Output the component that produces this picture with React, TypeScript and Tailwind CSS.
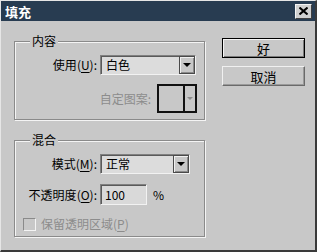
import React from 'react';

const FONT = { fontFamily: '"Noto Sans CJK SC", "Noto Sans", sans-serif' };

function Arrow({ color = '#000', small = false }: { color?: string; small?: boolean }) {
  const w = small ? 6 : 8;
  return (
    <svg width={w} height={small ? 3 : 4} viewBox={`0 0 ${w} ${small ? 3 : 4}`}>
      <polygon points={small ? '0,0 6,0 3,3' : '0,0 8,0 4,4'} fill={color} />
    </svg>
  );
}

function Combo({ value, width }: { value: string; width: string }) {
  return (
    <div
      className={`${width} h-[20px] flex items-stretch bg-[#dcdcdc] border border-[#808080] border-r-[#f2f2f2] border-b-[#f2f2f2] shadow-[inset_1px_1px_0_#5a5a5a]`}
    >
      <span className="flex-1 pl-[5px] text-[12px] leading-[18px] text-black">{value}</span>
      <span className="w-[16px] flex items-center justify-center bg-[#c8c8c8] border border-[#4a4a4a] shadow-[inset_1px_1px_0_#f0f0f0,inset_-1px_-1px_0_#8a8a8a]">
        <Arrow />
      </span>
    </div>
  );
}

function Label({ text, hot, rest = '):' }: { text: string; hot: string; rest?: string }) {
  return (
    <span className="text-[12px] leading-[20px] text-black whitespace-nowrap">
      {text}(<span className="underline underline-offset-2">{hot}</span>{rest}
    </span>
  );
}

function Group({ title, children }: { title: string; children: React.ReactNode }) {
  return (
    <div className="relative w-[191px] border border-[#8a8a8a] shadow-[inset_1px_1px_0_#f4f4f4,1px_1px_0_#f4f4f4]">
      <span className="absolute -top-[9px] left-[15px] px-[2px] bg-[#c8c8c8] text-[12px] leading-[16px] text-black">
        {title}
      </span>
      {children}
    </div>
  );
}

function Button({ text, primary = false }: { text: string; primary?: boolean }) {
  return (
    <button
      type="button"
      className={`w-[83px] h-[20px] flex items-center justify-center bg-[#c8c8c8] text-[13px] leading-none text-black ${
        primary
          ? 'border border-black shadow-[inset_1px_1px_0_#f4f4f4,inset_-1px_-1px_0_#7a7a7a]'
          : 'border border-[#f0f0f0] border-r-[#6a6a6a] border-b-[#6a6a6a] shadow-[inset_-1px_-1px_0_#9a9a9a]'
      }`}
    >
      {text}
    </button>
  );
}

export default function App() {
  return (
    <div
      className="w-[317px] h-[252px] flex flex-col bg-[#c8c8c8] border-t border-l border-[#e6e6e6] border-r-[#3a3a3a] border-b-[#3a3a3a] border-r-2 border-b-2"
      style={FONT}
    >
      <div className="h-[20px] mr-[0px] flex items-center justify-between bg-[#283c51] pl-[4px] pr-[3px]">
        <span className="text-[13px] font-bold text-white leading-none">填充</span>
        <span className="w-[17px] h-[15px] flex items-center justify-center bg-[#d0d0d0] border border-[#f4f4f4] border-r-[#404040] border-b-[#404040]">
          <svg width="9" height="8" viewBox="0 0 9 8">
            <path d="M0.5 0.5 L8.5 7.5 M8.5 0.5 L0.5 7.5" stroke="#000" strokeWidth="2" />
          </svg>
        </span>
      </div>

      <div className="flex">
        <div className="flex flex-col pl-[13px] pt-[20px] gap-[20px]">
          <Group title="内容">
            <div className="pt-[13px] pb-[6px] flex flex-col gap-[9px]">
              <div className="flex items-center gap-[3px]">
                <span className="w-[82px] flex justify-end">
                  <Label text="使用" hot="U" />
                </span>
                <Combo value="白色" width="w-[96px]" />
              </div>
              <div className="flex items-center gap-[6px]">
                <span className="w-[136px] text-right text-[12px] text-[#8c8c8c] leading-[20px]">自定图案:</span>
                <div className="w-[40px] h-[29px] flex border-2 border-[#111]">
                  <span className="flex-1 border-r-2 border-[#111]" />
                  <span className="w-[10px] flex items-center justify-center">
                    <Arrow color="#8c8c8c" small />
                  </span>
                </div>
              </div>
            </div>
          </Group>

          <Group title="混合">
            <div className="pt-[13px] pb-[5px] flex flex-col">
              <div className="flex items-center gap-[3px]">
                <span className="w-[82px] flex justify-end">
                  <Label text="模式" hot="M" />
                </span>
                <Combo value="正常" width="w-[90px]" />
              </div>
              <div className="mt-[10px] flex items-center gap-[3px]">
                <span className="w-[82px] flex justify-end">
                  <Label text="不透明度" hot="O" />
                </span>
                <div className="w-[47px] h-[21px] bg-[#d9d9d9] border border-[#808080] border-r-[#f2f2f2] border-b-[#f2f2f2] shadow-[inset_1px_1px_0_#5a5a5a] pl-[4px] text-[12px] leading-[19px] text-black">
                  100
                </div>
                <span className="ml-[3px] text-[12px] text-black">%</span>
              </div>
              <div className="mt-[12px] ml-[8px] flex items-center gap-[5px]">
                <span className="w-[13px] h-[13px] bg-[#c8c8c8] border border-[#8a8a8a] border-r-[#f4f4f4] border-b-[#f4f4f4]" />
                <span className="text-[12px] leading-[14px] text-[#8c8c8c]">
                  保留透明区域(<span className="underline underline-offset-2">P</span>)
                </span>
              </div>
            </div>
          </Group>
        </div>

        <div className="ml-[17px] pt-[17px] flex flex-col gap-[8px]">
          <Button text="好" primary />
          <Button text="取消" />
        </div>
      </div>
    </div>
  );
}
